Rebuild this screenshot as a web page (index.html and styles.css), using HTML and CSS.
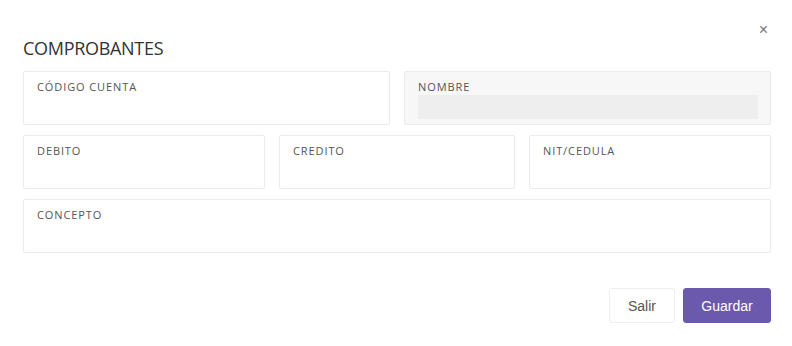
FILE: index.html
```html
<!DOCTYPE html>
<html lang="es">
<head>
  <meta charset="utf-8" />
  <title>Comprobantes</title>
  <link rel="stylesheet" href="styles.css">
</head>
<body>
  <div class="modal">
    <button class="close" aria-label="Cerrar">&times;</button>
    <h2 class="modal-title">COMPROBANTES</h2>

    <form class="form">
      <div class="row row-2">
        <label class="field">
          <span class="field-label">CÓDIGO CUENTA</span>
          <input class="field-input" type="text" />
        </label>
        <label class="field disabled">
          <span class="field-label">NOMBRE</span>
          <input class="field-input" type="text" disabled />
        </label>
      </div>

      <div class="row row-3">
        <label class="field">
          <span class="field-label">DEBITO</span>
          <input class="field-input" type="text" />
        </label>
        <label class="field">
          <span class="field-label">CREDITO</span>
          <input class="field-input" type="text" />
        </label>
        <label class="field">
          <span class="field-label">NIT/CEDULA</span>
          <input class="field-input" type="text" />
        </label>
      </div>

      <div class="row">
        <label class="field">
          <span class="field-label">CONCEPTO</span>
          <input class="field-input" type="text" />
        </label>
      </div>

      <div class="actions">
        <button type="button" class="btn btn-light">Salir</button>
        <button type="button" class="btn btn-primary">Guardar</button>
      </div>
    </form>
  </div>
</body>
</html>
```

FILE: styles.css
```css
:root{
  --border:#ebebeb;
  --label:#555;
  --title:#333;
  --primary:#6b59ad;
  --disabled-bg:#f7f7f7;
  --disabled-input:#eeeeee;
}

* { box-sizing: border-box; }

body{
  margin:0;
  background:#fff;
  font-family:"Open Sans", "Liberation Sans", Arial, sans-serif;
}

.modal{
  position:relative;
  width:792px; height:346px;
  padding:36px 21px 0 23px;
}

.close{
  position:absolute; top:20px; right:24px;
  border:0; background:none; padding:0;
  font-family:"Liberation Sans", Arial, sans-serif;
  font-size:16px; line-height:20px; color:#777; cursor:pointer;
}

.modal-title{
  margin:0 0 11px;
  font-size:18px; font-weight:400; line-height:24px;
  color:var(--title); letter-spacing:-0.3px;
}

.form{ display:flex; flex-direction:column; gap:10px; }

.row{ display:grid; grid-template-columns:1fr; gap:14px; }
.row-2{ grid-template-columns:1fr 1fr; }
.row-3{ grid-template-columns:242px 236px 1fr; }

.field{
  display:flex; flex-direction:column;
  height:54px; padding:8px 12px 0 13px;
  border:1px solid var(--border); border-radius:2px;
  background:#fff;
}
.field.disabled{ background:var(--disabled-bg); }

.field-label{
  font-size:11px; line-height:14px; letter-spacing:0.9px;
  color:var(--label);
}

.field-input{
  margin-top:1px; height:24px; width:100%;
  border:0; padding:0; outline:none; background:transparent;
  font:inherit; font-size:13px; color:#333;
}
.field.disabled .field-input{ background:var(--disabled-input); }

.actions{
  display:flex; justify-content:flex-end; gap:8px;
  margin-top:25px;
}

.btn{
  height:35px; border-radius:3px; cursor:pointer;
  font-family:"Liberation Sans", Arial, sans-serif; font-size:14px;
}
.btn-light{
  width:66px; background:#fff; color:#555;
  border:1px solid #eeeeee;
}
.btn-primary{
  width:88px; background:var(--primary); color:#fff;
  border:1px solid var(--primary);
}
```
